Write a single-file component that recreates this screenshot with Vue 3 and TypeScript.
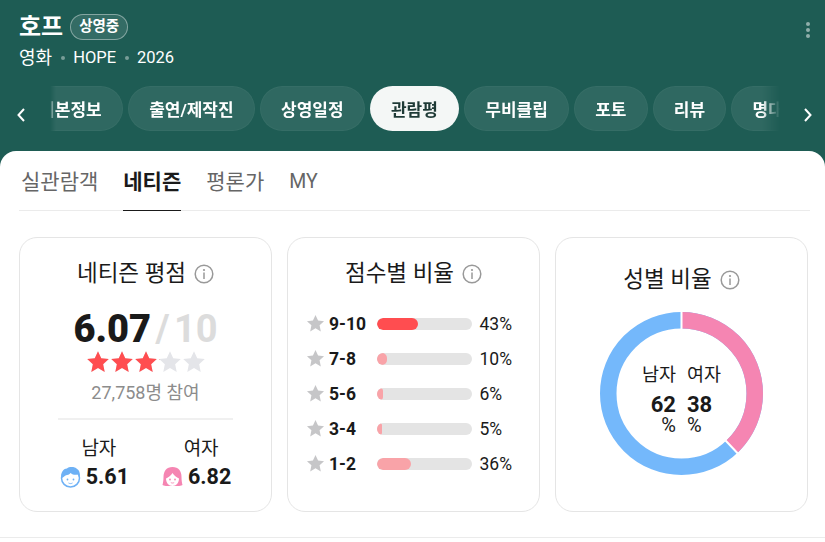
<script setup lang="ts">
const navItems = ['기본정보', '출연/제작진', '상영일정', '관람평', '무비클립', '포토', '리뷰', '명대사']
const subTabs = ['실관람객', '네티즌', '평론가', 'MY']
const scoreRows = [
  { label: '9-10', pct: 43, top: true },
  { label: '7-8', pct: 10, top: false },
  { label: '5-6', pct: 6, top: false },
  { label: '3-4', pct: 5, top: false },
  { label: '1-2', pct: 36, top: false },
]
const starPath = 'M10 1l2.7 5.9 6.3.7-4.7 4.3 1.3 6.4L10 15.1l-5.6 3.2 1.3-6.4L1 7.6l6.3-.7z'
const rating = 6.07
const r = 73.25
const circ = 2 * Math.PI * r
const femalePct = 38
</script>

<template>
  <div class="page">
    <header class="head">
      <div class="head-top">
        <div>
          <div class="title-row">
            <h1 class="title">호프</h1>
            <span class="badge">상영중</span>
          </div>
          <div class="meta">
            <span class="meta-ko">영화</span><i class="dot"></i><span>HOPE</span><i class="dot"></i><span>2026</span>
          </div>
        </div>
        <div class="more"><i></i><i></i><i></i></div>
      </div>
      <div class="nav">
        <svg class="arrow" width="10" height="16" viewBox="0 0 10 16"><path d="M8 2L2.500 8 8 14" fill="none" stroke="#fff" stroke-width="2" /></svg>
        <div class="nav-scroll">
          <div class="nav-track">
            <span v-for="item in navItems" :key="item" class="pill" :class="{ on: item === '관람평' }">{{ item }}</span>
          </div>
        </div>
        <svg class="arrow" width="10" height="16" viewBox="0 0 10 16"><path d="M2 2l5.500 6L2 14" fill="none" stroke="#fff" stroke-width="2" /></svg>
      </div>
    </header>

    <main class="body">
      <div class="tabs">
        <span v-for="tab in subTabs" :key="tab" class="tab" :class="{ on: tab === '네티즌', latin: tab === 'MY' }">{{ tab }}</span>
      </div>

      <div class="cards">
        <section class="card">
          <h2 class="card-title">네티즌 평점<svg class="info" viewBox="0 0 20 20"><circle cx="10" cy="10" r="8.800" fill="none" stroke="#999" stroke-width="1.500" /><circle cx="10" cy="6" r="1.100" fill="#999" /><path d="M10 8.500v6.500" stroke="#999" stroke-width="1.500" /></svg></h2>
          <div class="score"><b>6.07</b><span> / 10</span></div>
          <div class="stars">
            <svg v-for="n in 5" :key="n" width="24" height="24" viewBox="0 0 20 20"><path :d="starPath" fill="#e4e5e9" /></svg>
            <div class="stars-on" :style="{ width: rating * 10 + 1.3 + '%' }">
              <svg v-for="n in 5" :key="n" width="24" height="24" viewBox="0 0 20 20"><path :d="starPath" fill="#ff4d50" /></svg>
            </div>
          </div>
          <div class="count">27,758명 참여</div>
          <div class="split">
            <div class="side">
              <div class="side-label">남자</div>
              <div class="side-val">
                <svg width="21" height="22" viewBox="0 0 21 22">
                  <circle cx="10.500" cy="12" r="9" fill="#fff" stroke="#6eb1f5" stroke-width="1.500" />
                  <path d="M1.500 12C.5 7 3 2.500 7 2.500 9 .5 15 .5 17 3c2.500 1 3.500 5 2.500 9-.7-1-1-2.500-2-3.500-2 .8-5 .3-7-1.500-1 1.500-3 2-5 2.500-1.500 1-2.500 2-3.500 2.500z" fill="#6eb1f5" />
                  <circle cx="7.500" cy="13.500" r=".9" fill="#6eb1f5" /><circle cx="13.500" cy="13.500" r=".9" fill="#6eb1f5" />
                  <path d="M8.500 17c1.300.8 2.700.8 4 0" fill="none" stroke="#6eb1f5" stroke-width=".9" />
                </svg>
                <b>5.61</b>
              </div>
            </div>
            <div class="side">
              <div class="side-label">여자</div>
              <div class="side-val">
                <svg width="21" height="22" viewBox="0 0 21 22">
                  <path d="M10.500 1C4.500 1 1.500 5 1.500 11c0 3.500-.5 6-1 8 1.500.8 3 1 4.500 1h11c1.500 0 3-.2 4.500-1-.5-2-1-4.500-1-8 0-6-3-10-9-10z" fill="#f585b2" />
                  <path d="M4 12.500C6.500 11.500 9 9.500 10.500 7c1.500 2.500 4 4.500 6.500 5.500 0 4.500-2.800 7.500-6.500 7.500S4 17 4 12.500z" fill="#fff" />
                  <circle cx="8" cy="13.500" r=".9" fill="#f585b2" /><circle cx="13" cy="13.500" r=".9" fill="#f585b2" />
                  <path d="M8.800 16.500c1.100.7 2.300.7 3.400 0" fill="none" stroke="#f585b2" stroke-width=".9" />
                </svg>
                <b>6.82</b>
              </div>
            </div>
          </div>
        </section>

        <section class="card">
          <h2 class="card-title">점수별 비율<svg class="info" viewBox="0 0 20 20"><circle cx="10" cy="10" r="8.800" fill="none" stroke="#999" stroke-width="1.500" /><circle cx="10" cy="6" r="1.100" fill="#999" /><path d="M10 8.500v6.500" stroke="#999" stroke-width="1.500" /></svg></h2>
          <div class="rows">
            <div v-for="row in scoreRows" :key="row.label" class="row">
              <svg width="19" height="19" viewBox="0 0 20 20"><path :d="starPath" fill="#c6c6c8" /></svg>
              <b class="row-label">{{ row.label }}</b>
              <div class="bar"><div class="fill" :class="{ top: row.top }" :style="{ width: row.pct + '%' }"></div></div>
              <span class="row-pct">{{ row.pct }}%</span>
            </div>
          </div>
        </section>

        <section class="card">
          <h2 class="card-title gender-title">성별 비율<svg class="info" viewBox="0 0 20 20"><circle cx="10" cy="10" r="8.800" fill="none" stroke="#999" stroke-width="1.500" /><circle cx="10" cy="6" r="1.100" fill="#999" /><path d="M10 8.500v6.500" stroke="#999" stroke-width="1.500" /></svg></h2>
          <div class="donut">
            <svg width="163" height="163" viewBox="0 0 163 163">
              <g transform="rotate(-90 81.5 81.5)">
                <circle cx="81.5" cy="81.5" :r="r" fill="none" stroke="#74b8fb" stroke-width="16.500" />
                <circle cx="81.5" cy="81.5" :r="r" fill="none" stroke="#f585b2" stroke-width="16.500" :stroke-dasharray="`${circ * femalePct / 100} ${circ}`" />
              </g>
              <path d="M81.500 0v18M125.300 128.200l13 13.800" stroke="#fff" stroke-width="2" />
            </svg>
            <div class="donut-text">
              <div class="donut-col left"><span>남자</span><b>62</b><em>%</em></div>
              <div class="donut-col"><span>여자</span><b>38</b><em>%</em></div>
            </div>
          </div>
        </section>
      </div>
      <div class="foot-line"></div>
    </main>
  </div>
</template>

<style scoped>
.page {
  width: 825px;
  height: 542px;
  overflow: hidden;
  background: #1e5c54;
  font-family: Roboto, "Noto Sans CJK KR", sans-serif;
  color: #1a1a1a;
}
.head {
  height: 151px;
  box-sizing: border-box;
  padding: 14px 0 0 19px;
  color: #fff;
}
.head-top {
  display: flex;
  justify-content: space-between;
  height: 72px;
  padding-right: 15px;
}
.title-row {
  display: flex;
  align-items: center;
  gap: 7px;
  height: 26px;
}
.title {
  margin: 0;
  font-size: 24px;
  font-weight: 700;
  line-height: 26px;
}
.badge {
  height: 26px;
  line-height: 24px;
  box-sizing: border-box;
  padding: 0 8px;
  border: 1px solid rgba(255, 255, 255, 0.4);
  border-radius: 13px;
  background: rgba(255, 255, 255, 0.1);
  font-size: 14.500px;
  font-weight: 700;
}
.meta {
  display: flex;
  align-items: center;
  margin-top: 5px;
  font-size: 16.500px;
  line-height: 26px;
}
.meta-ko {
  font-size: 18px;
}
.dot {
  width: 4px;
  height: 4px;
  margin: 0 8.500px;
  border-radius: 50%;
  background: rgba(255, 255, 255, 0.4);
}
.more {
  display: flex;
  flex-direction: column;
  gap: 2px;
  padding-top: 8px;
}
.more i {
  width: 4px;
  height: 4px;
  border-radius: 50%;
  background: rgba(255, 255, 255, 0.5);
}
.nav {
  display: flex;
  align-items: center;
  margin-left: -19px;
}
.arrow {
  flex: none;
  margin: 13px 24px 0 16px;
}
.arrow:last-child {
  margin: 13px 0 0 23px;
}
.nav-scroll {
  width: 730px;
  overflow: hidden;
  -webkit-mask-image: linear-gradient(90deg, transparent 0, #000 6px, #000 712px, transparent 730px);
  mask-image: linear-gradient(90deg, transparent 0, #000 6px, #000 712px, transparent 730px);
}
.nav-track {
  display: flex;
  gap: 5px;
  margin-left: -32px;
}
.pill {
  flex: none;
  height: 45px;
  line-height: 46px;
  box-sizing: border-box;
  padding: 0 20.200px;
  border-radius: 23px;
  border: 1px solid rgba(255, 255, 255, 0.03);
  background: rgba(255, 255, 255, 0.08);
  font-size: 17px;
  font-weight: 700;
  white-space: nowrap;
}
.pill.on {
  background: #f4f7f6;
  color: #1e3a36;
}
.body {
  height: 391px;
  box-sizing: border-box;
  padding: 0 15px 0 19px;
  background: #fff;
  border-radius: 16px 16px 0 0;
}
.tabs {
  display: flex;
  gap: 25px;
  height: 60px;
  box-sizing: border-box;
  padding-left: 2px;
  border-bottom: 1px solid #ebebeb;
}
.tab {
  height: 60px;
  line-height: 62px;
  font-size: 21px;
  color: #666;
}
.tab.latin {
  font-size: 19.500px;
}
.tab.on {
  box-sizing: border-box;
  border-bottom: 1px solid #1a1a1a;
  font-weight: 700;
  color: #1a1a1a;
}
.cards {
  display: flex;
  gap: 15px;
  margin-top: 26px;
}
.card {
  flex: none;
  width: 253px;
  height: 275px;
  box-sizing: border-box;
  border: 1px solid #e5e5e5;
  border-radius: 18px;
  display: flex;
  flex-direction: column;
  align-items: center;
}
.card-title {
  display: flex;
  align-items: center;
  gap: 8px;
  margin: 21px 0 -1px;
  font-size: 22.500px;
  font-weight: 400;
  line-height: 28px;
  white-space: pre;
}
.gender-title {
  margin-top: 27px;
}
.info {
  width: 20px;
  height: 20px;
  margin-top: 2px;
}
.score {
  margin-top: 18px;
  font-size: 38px;
  line-height: 50px;
  font-weight: 700;
  white-space: pre;
  word-spacing: -5px;
}
.score span {
  color: #dcdcdc;
}
.stars {
  position: relative;
  display: flex;
  margin-top: -4px;
}
.stars-on {
  position: absolute;
  top: 0;
  left: 0;
  display: flex;
  overflow: hidden;
}
.stars svg {
  flex: none;
}
.count {
  margin-top: 7px;
  font-size: 18px;
  line-height: 24px;
  color: #8c8c8c;
}
.split {
  display: flex;
  justify-content: center;
  gap: 33px;
  width: 175px;
  margin-top: 13px;
  padding-top: 16px;
  border-top: 2px solid #f0f0f0;
}
.side {
  text-align: center;
}
.side-label {
  padding-left: 9px;
  font-size: 19px;
  line-height: 25px;
}
.side-val {
  display: flex;
  align-items: center;
  gap: 5px;
  font-size: 21.500px;
  line-height: 31px;
}
.rows {
  display: flex;
  flex-direction: column;
  gap: 10px;
  align-self: stretch;
  margin-top: 25px;
  padding-left: 18px;
}
.row {
  display: flex;
  align-items: center;
  height: 25px;
}
.row-label {
  width: 48px;
  margin-left: 4px;
  font-size: 17.500px;
}
.bar {
  width: 95px;
  height: 12px;
  border-radius: 6px;
  background: #e4e4e4;
  overflow: hidden;
}
.fill {
  height: 100%;
  border-radius: 6px;
  background: #f9a3a8;
}
.fill.top {
  background: #ff4d50;
}
.row-pct {
  margin-left: 7.500px;
  font-size: 17.500px;
}
.donut {
  position: relative;
  width: 163px;
  height: 163px;
  margin-top: 20px;
}
.donut svg {
  display: block;
}
.donut-text {
  position: absolute;
  inset: 0;
  display: flex;
  justify-content: center;
  gap: 11px;
  padding-top: 51px;
}
.donut-col {
  display: flex;
  flex-direction: column;
  align-items: flex-start;
  width: 34px;
}
.donut-col.left {
  align-items: flex-end;
}
.donut-col span {
  font-size: 18.500px;
  line-height: 24px;
  white-space: nowrap;
}
.donut-col b {
  margin-top: 5px;
  font-size: 22px;
  line-height: 26px;
}
.donut-col em {
  font-style: normal;
  font-size: 20px;
  line-height: 14px;
}
.foot-line {
  height: 1px;
  margin: 25px -15px 0 -19px;
  background: #ebebeb;
}
</style>
